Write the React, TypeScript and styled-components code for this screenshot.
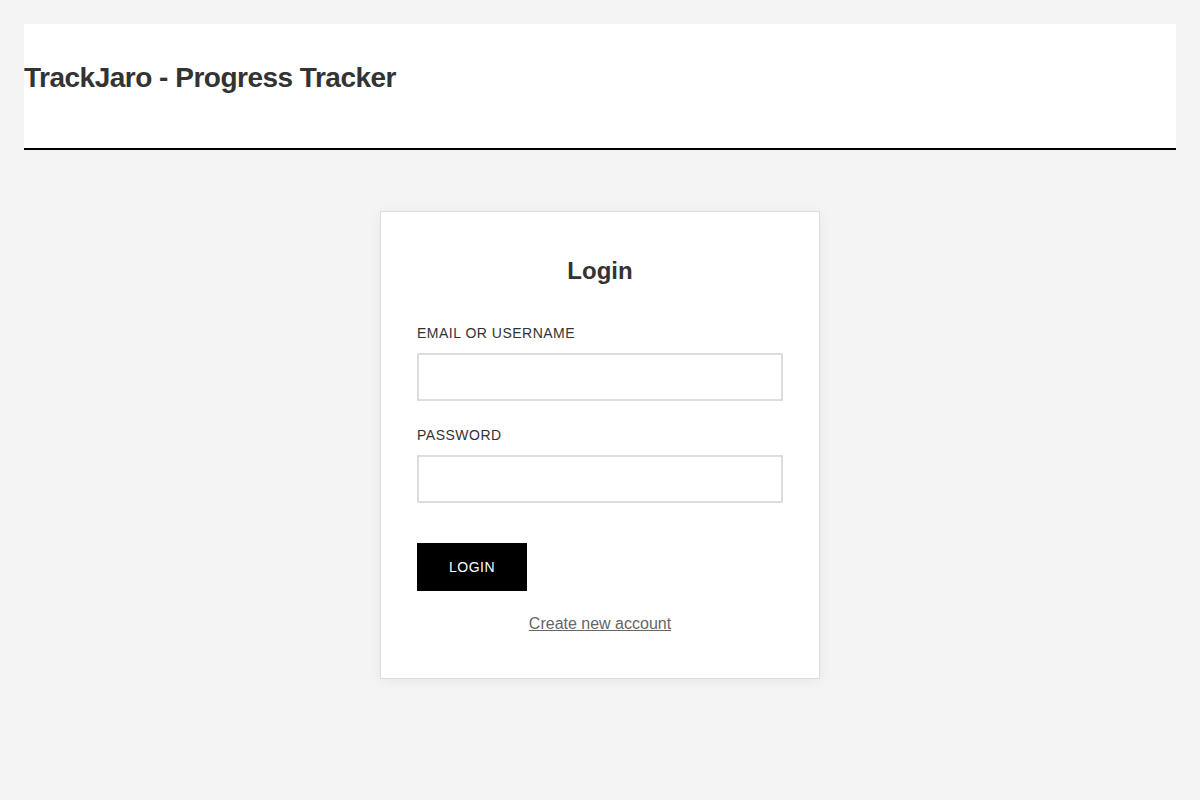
import React from "react";
import styled, { createGlobalStyle } from "styled-components";

const Global = createGlobalStyle`
  html, body { margin: 0; padding: 0; background: #f4f4f4; }
  body { font-family: "Liberation Sans", Arial, sans-serif; color: #333; }
  * { box-sizing: border-box; }
`;

const Page = styled.div`
  padding: 24px;
  min-height: 800px;
`;

const Header = styled.header`
  background: #fff;
  border-bottom: 2px solid #000;
  height: 126px;
  display: flex;
  align-items: center;
  padding-bottom: 16px;
`;

const Title = styled.h1`
  margin: 0;
  font-size: 28px;
  line-height: 32px;
  font-weight: 700;
  letter-spacing: -0.5px;
  color: #333;
`;

const Card = styled.form`
  width: 440px;
  margin: 61px auto 0;
  background: #fff;
  border: 1px solid #ddd;
  box-shadow: 0 2px 12px rgba(0, 0, 0, 0.06);
  padding: 45px 36px 45px;
  display: flex;
  flex-direction: column;
`;

const CardTitle = styled.h2`
  margin: 0 0 40px;
  font-size: 24px;
  line-height: 28px;
  font-weight: 700;
  text-align: center;
  color: #333;
`;

const Field = styled.div<{ $last?: boolean }>`
  display: flex;
  flex-direction: column;
  margin-bottom: ${(p) => (p.$last ? "40px" : "26px")};
`;

const Label = styled.label`
  font-size: 14px;
  line-height: 16px;
  letter-spacing: 0.5px;
  text-transform: uppercase;
  color: #333;
  margin-bottom: 12px;
`;

const Input = styled.input`
  height: 48px;
  border: 2px solid #ddd;
  background: #fff;
  padding: 0 12px;
  font-family: inherit;
  font-size: 16px;
  outline: none;
`;

const Button = styled.button`
  align-self: flex-start;
  height: 48px;
  padding: 0 32px;
  background: #000;
  color: #fff;
  border: none;
  font-family: inherit;
  font-size: 14px;
  letter-spacing: 0.5px;
  text-transform: uppercase;
  cursor: pointer;
`;

const LinkRow = styled.div`
  margin-top: 24px;
  text-align: center;
  font-size: 16px;
  line-height: 18px;
`;

const Link = styled.a`
  color: #666;
  text-decoration: underline;
`;

export default function App() {
  return (
    <>
      <Global />
      <Page>
        <Header>
          <Title>TrackJaro - Progress Tracker</Title>
        </Header>
        <Card onSubmit={(e) => e.preventDefault()}>
          <CardTitle>Login</CardTitle>
          <Field>
            <Label htmlFor="user">Email or Username</Label>
            <Input id="user" type="text" />
          </Field>
          <Field $last>
            <Label htmlFor="pw">Password</Label>
            <Input id="pw" type="password" />
          </Field>
          <Button type="submit">Login</Button>
          <LinkRow>
            <Link href="#">Create new account</Link>
          </LinkRow>
        </Card>
      </Page>
    </>
  );
}
